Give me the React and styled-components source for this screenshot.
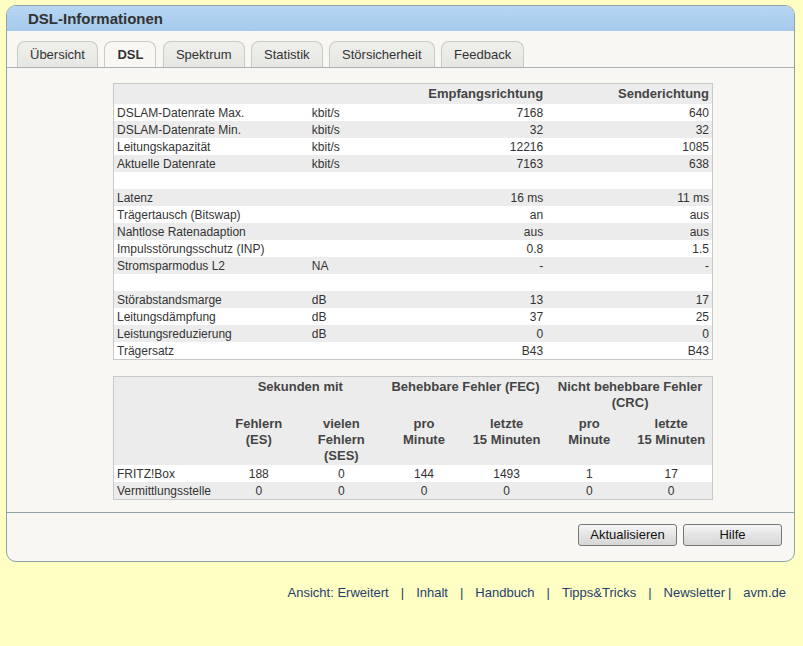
import React from "react";
import styled, { createGlobalStyle } from "styled-components";

const GlobalStyle = createGlobalStyle`
  html, body { margin: 0; padding: 0; }
  body {
    background: #ffffc4;
    font-family: "Liberation Sans", Arial, sans-serif;
    color: #333;
  }
`;

const Page = styled.div`
  padding: 5px 8px 20px 6px;
`;

const Box = styled.div`
  border: 1px solid #8ea2a8;
  border-radius: 10px;
  background: #f8f7f3;
  overflow: hidden;
`;

const Header = styled.div`
  height: 25px;
  line-height: 26px;
  padding-left: 21px;
  background: linear-gradient(#b6d6f3, #a6caec);
  font-size: 15px;
  font-weight: bold;
  color: #333;
`;

const TabBar = styled.div`
  display: flex;
  align-items: flex-end;
  gap: 6.5px;
  padding: 10px 0 0 10px;
  border-bottom: 1px solid #abb3b5;
`;

const Tab = styled.div`
  height: 25px;
  line-height: 25px;
  padding: 0 12px;
  border: 1px solid #c9c9c6;
  border-bottom: none;
  border-radius: 8px 8px 0 0;
  background: ${(p) => (p.$active ? "#f8f7f3" : "linear-gradient(#efefec, #e6e6e3)")};
  font-size: 13px;
  font-weight: ${(p) => (p.$active ? "bold" : "normal")};
  color: #333;
  white-space: nowrap;
`;

const Content = styled.div`
  padding: 15px 0 12px 106px;
  display: flex;
  flex-direction: column;
  gap: 16px;
`;

const Table = styled.table`
  width: 600px;
  border-collapse: collapse;
  table-layout: fixed;
  border: 1px solid #c8c8c8;
  font-size: 12px;
  color: #333;

  tbody tr:nth-child(even) td {
    background: #ececec;
  }
  tbody td {
    background: #fff;
  }
`;

const HeadRow = styled.tr`
  background: #ececec;
`;

const Th = styled.th`
  height: ${(p) => p.$h || "20px"};
  padding: ${(p) => p.$pad || "0 3px"};
  font-size: 13px;
  font-weight: bold;
  line-height: 16px;
  color: #444;
  text-align: ${(p) => p.$align || "center"};
  vertical-align: ${(p) => p.$valign || "middle"};
  box-sizing: border-box;
`;

const Td = styled.td`
  height: 17px;
  padding: 1px 3px 0;
  line-height: 16px;
  box-sizing: border-box;
  text-align: ${(p) => p.$align || "left"};
  white-space: nowrap;
  overflow: hidden;
`;

const ButtonBar = styled.div`
  display: flex;
  justify-content: flex-end;
  gap: 6px;
  padding: 11px 12px 15px;
  border-top: 1px solid #8ea2a8;
`;

const Button = styled.button`
  width: 99px;
  height: 22px;
  padding: 0;
  border: 1px solid #777;
  border-radius: 3px;
  background: linear-gradient(#f6f6f6, #e4e4e4 50%, #d6d6d6);
  font-family: "Liberation Sans", Arial, sans-serif;
  font-size: 13px;
  color: #111;
`;

const Footer = styled.div`
  display: flex;
  justify-content: flex-end;
  margin: 23px 9px 0 0;
  font-size: 13px;
  line-height: 15px;
  color: #1f3d6e;
`;

const FooterLink = styled.span``;

const Sep = styled.span`
  padding: ${(p) => (p.$tight ? "0 12px 0 3px" : "0 12px")};
`;

const dslRows = [
  ["DSLAM-Datenrate Max.", "kbit/s", "7168", "640"],
  ["DSLAM-Datenrate Min.", "kbit/s", "32", "32"],
  ["Leitungskapazität", "kbit/s", "12216", "1085"],
  ["Aktuelle Datenrate", "kbit/s", "7163", "638"],
  ["", "", "", ""],
  ["Latenz", "", "16 ms", "11 ms"],
  ["Trägertausch (Bitswap)", "", "an", "aus"],
  ["Nahtlose Ratenadaption", "", "aus", "aus"],
  ["Impulsstörungsschutz (INP)", "", "0.8", "1.5"],
  ["Stromsparmodus L2", "NA", "-", "-"],
  ["", "", "", ""],
  ["Störabstandsmarge", "dB", "13", "17"],
  ["Leitungsdämpfung", "dB", "37", "25"],
  ["Leistungsreduzierung", "dB", "0", "0"],
  ["Trägersatz", "", "B43", "B43"],
];

const errRows = [
  ["FRITZ!Box", "188", "0", "144", "1493", "1", "17"],
  ["Vermittlungsstelle", "0", "0", "0", "0", "0", "0"],
];

const tabs = ["Übersicht", "DSL", "Spektrum", "Statistik", "Störsicherheit", "Feedback"];
const links = ["Ansicht: Erweitert", "Inhalt", "Handbuch", "Tipps&Tricks", "Newsletter", "avm.de"];

export default function App() {
  return (
    <>
      <GlobalStyle />
      <Page>
        <Box>
          <Header>DSL-Informationen</Header>
          <TabBar>
            {tabs.map((t) => (
              <Tab key={t} $active={t === "DSL"}>
                {t}
              </Tab>
            ))}
          </TabBar>
          <Content>
            <Table>
              <colgroup>
                <col style={{ width: 195 }} />
                <col style={{ width: 90 }} />
                <col style={{ width: 147 }} />
                <col style={{ width: 166 }} />
              </colgroup>
              <thead>
                <HeadRow>
                  <Th />
                  <Th />
                  <Th $align="right">Empfangsrichtung</Th>
                  <Th $align="right">Senderichtung</Th>
                </HeadRow>
              </thead>
              <tbody>
                {dslRows.map((r, i) => (
                  <tr key={i}>
                    <Td>{r[0]}</Td>
                    <Td>{r[1]}</Td>
                    <Td $align="right">{r[2]}</Td>
                    <Td $align="right">{r[3]}</Td>
                  </tr>
                ))}
              </tbody>
            </Table>
            <Table>
              <colgroup>
                <col style={{ width: 104 }} />
                <col style={{ width: 82 }} />
                <col style={{ width: 83 }} />
                <col style={{ width: 82 }} />
                <col style={{ width: 83 }} />
                <col style={{ width: 82 }} />
                <col style={{ width: 82 }} />
              </colgroup>
              <thead>
                <HeadRow>
                  <Th $h="34px" $pad="2px 3px 0" $valign="top" />
                  <Th colSpan={2} $h="34px" $pad="2px 3px 0" $valign="top">
                    Sekunden mit
                  </Th>
                  <Th colSpan={2} $h="34px" $pad="2px 0 0" $valign="top">
                    Behebbare Fehler (FEC)
                  </Th>
                  <Th colSpan={2} $h="34px" $pad="2px 0 0" $valign="top">
                    Nicht behebbare Fehler (CRC)
                  </Th>
                </HeadRow>
                <HeadRow>
                  <Th $h="54px" $pad="5px 3px 1px" $valign="top" />
                  <Th $h="54px" $pad="5px 3px 1px" $valign="top">
                    Fehlern
                    <br />
                    (ES)
                  </Th>
                  <Th $h="54px" $pad="5px 3px 1px" $valign="top">
                    vielen
                    <br />
                    Fehlern
                    <br />
                    (SES)
                  </Th>
                  <Th $h="54px" $pad="5px 3px 1px" $valign="top">
                    pro
                    <br />
                    Minute
                  </Th>
                  <Th $h="54px" $pad="5px 3px 1px" $valign="top">
                    letzte
                    <br />
                    15 Minuten
                  </Th>
                  <Th $h="54px" $pad="5px 3px 1px" $valign="top">
                    pro
                    <br />
                    Minute
                  </Th>
                  <Th $h="54px" $pad="5px 3px 1px" $valign="top">
                    letzte
                    <br />
                    15 Minuten
                  </Th>
                </HeadRow>
              </thead>
              <tbody>
                {errRows.map((r, i) => (
                  <tr key={i}>
                    {r.map((c, j) => (
                      <Td key={j} $align={j === 0 ? "left" : "center"}>
                        {c}
                      </Td>
                    ))}
                  </tr>
                ))}
              </tbody>
            </Table>
          </Content>
          <ButtonBar>
            <Button>Aktualisieren</Button>
            <Button>Hilfe</Button>
          </ButtonBar>
        </Box>
        <Footer>
          {links.map((l, i) => (
            <React.Fragment key={l}>
              {i > 0 && <Sep $tight={l === "avm.de"}>|</Sep>}
              <FooterLink>{l}</FooterLink>
            </React.Fragment>
          ))}
        </Footer>
      </Page>
    </>
  );
}
